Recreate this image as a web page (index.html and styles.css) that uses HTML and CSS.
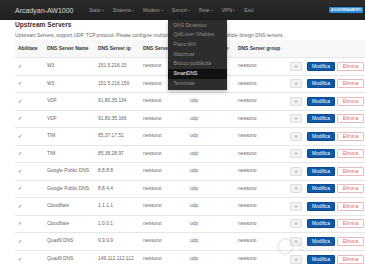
FILE: index.html
```html
<!DOCTYPE html>
<html lang="it">
<head>
  <meta charset="UTF-8" />
  <meta name="viewport" content="width=device-width, initial-scale=1.0"/>
  <title>Arcadyan-AW1000 - SmartDNS</title>
  <link rel="stylesheet" href="styles.css">
</head>
<body>

  <!-- barra di navigazione -->
  <header class="navbar">
    <a class="brand" href="#">Arcadyan-AW1000</a>
    <ul class="nav">
      <li><a href="#">Stato <span class="caret"></span></a></li>
      <li><a href="#">Sistema <span class="caret"></span></a></li>
      <li><a href="#">Modem <span class="caret"></span></a></li>
      <li class="open">
        <a href="#">Servizi <span class="caret"></span></a>
        <ul class="dropdown">
          <li><a href="#">DNS Dinamico</a></li>
          <li><a href="#">QoS over Nftables</a></li>
          <li><a href="#">Piano Wifi</a></li>
          <li><a href="#">Watchcat</a></li>
          <li><a href="#">Blocco pubblicità</a></li>
          <li class="active"><a href="#">SmartDNS</a></li>
          <li><a href="#">Terminale</a></li>
        </ul>
      </li>
      <li><a href="#">Rete <span class="caret"></span></a></li>
      <li><a href="#">VPN <span class="caret"></span></a></li>
      <li><a href="#">Esci</a></li>
    </ul>
    <span class="badge">AGGIORNAMENTI</span>
  </header>

  <main class="content">
    <h2>Upstream Servers</h2>
    <p class="desc">Upstream Servers, support UDP, TCP protocol. Please configure multiple DNS servers, including multiple foreign DNS servers.</p>

    <table class="servers">
      <colgroup>
        <col class="c-enable"><col class="c-name"><col class="c-ip"><col class="c-port"><col class="c-type"><col class="c-group"><col class="c-actions">
      </colgroup>
      <thead>
        <tr>
          <th>Abilitare</th>
          <th>DNS Server Name</th>
          <th>DNS Server ip</th>
          <th>DNS Server port</th>
          <th>DNS Server type</th>
          <th>DNS Server group</th>
          <th></th>
        </tr>
      </thead>
      <tbody id="rows"></tbody>
    </table>
  </main>

  <!-- filigrana -->
  <div class="watermark"><span class="wm-logo"></span>Subito</div>

  <script>
    const servers = [
      ["W3", "151.5.216.15"],
      ["W3", "151.5.216.150"],
      ["VDF", "91.80.35.134"],
      ["VDF", "91.80.35.166"],
      ["TIM", "85.37.17.51"],
      ["TIM", "85.38.28.97"],
      ["Google Public DNS", "8.8.8.8"],
      ["Google Public DNS", "8.8.4.4"],
      ["Cloudflare", "1.1.1.1"],
      ["Cloudflare", "1.0.0.1"],
      ["Quad9 DNS", "9.9.9.9"],
      ["Quad9 DNS", "149.112.112.112"]
    ];

    const tbody = document.getElementById("rows");
    servers.forEach(function(s) {
      const tr = document.createElement("tr");
      tr.innerHTML =
        '<td><span class="check">✓</span></td>' +
        '<td>' + s[0] + '</td>' +
        '<td>' + s[1] + '</td>' +
        '<td>nessuno</td>' +
        '<td>udp</td>' +
        '<td>nessuno</td>' +
        '<td><div class="actions"><button class="btn btn-drag">≡</button>' +
        '<button class="btn btn-edit">Modifica</button>' +
        '<button class="btn btn-remove">Elimina</button></div></td>';
      tbody.appendChild(tr);
    });
  </script>

</body>
</html>
```

FILE: styles.css
```css
body {
  margin: 0;
  font-family: 'Liberation Sans', Arial, sans-serif;
  background: #fff;
  color: #555;
  overflow: hidden;
}

/* barra di navigazione */
.navbar {
  height: 20px;
  display: flex;
  align-items: center;
  padding-left: 15px;
  background: linear-gradient(to bottom, #2c2c2c, #1f1f1f);
  position: relative;
  z-index: 10;
}

.brand {
  color: #ddd;
  text-decoration: none;
  font-size: 7px;
}

.nav {
  list-style: none;
  margin: 0 0 0 11px;
  padding: 0;
  display: flex;
  height: 100%;
}

.nav > li {
  position: relative;
  display: flex;
  align-items: center;
}

.nav > li > a {
  color: #9d9d9d;
  text-decoration: none;
  font-size: 5px;
  padding: 0 4.4px;
  white-space: nowrap;
}

.caret {
  display: inline-block;
  width: 0;
  height: 0;
  vertical-align: middle;
  border-top: 1.5px solid #9d9d9d;
  border-left: 1.5px solid transparent;
  border-right: 1.5px solid transparent;
}

.dropdown {
  position: absolute;
  top: 100%;
  left: 1px;
  width: 59px;
  margin: 0;
  padding: 0.5px 0 2px;
  list-style: none;
  background: #2d2d2d;
  box-shadow: 0 2px 4px rgba(0,0,0,0.25);
}

.dropdown li a {
  display: block;
  height: 9.7px;
  line-height: 9.7px;
  padding-left: 5px;
  font-size: 5px;
  color: #8f8f8f;
  text-decoration: none;
  white-space: nowrap;
}

.dropdown li.active a {
  background: #111;
  color: #fff;
}

.badge {
  margin-left: auto;
  margin-right: 2px;
  background: #2a8ad6;
  color: #fff;
  font-size: 3.4px;
  font-weight: bold;
  padding: 1px 1.8px;
  border-radius: 1px;
  letter-spacing: 0.1px;
}

/* contenuto */
.content {
  padding: 0 15px;
}

h2 {
  margin: 1px 0 0;
  font-size: 6.6px;
  line-height: 8px;
  color: #333;
}

.desc {
  margin: 2.5px 0 0;
  font-size: 4.8px;
  line-height: 7px;
  color: #666;
  white-space: nowrap;
}

.servers {
  table-layout: fixed;
  width: 357px;
  border-collapse: collapse;
  margin-top: 1.5px;
  font-size: 4.9px;
}

.c-enable { width: 29px; }
.c-name { width: 51px; }
.c-ip { width: 45px; }
.c-port { width: 47px; }
.c-type { width: 48px; }
.c-group { width: 52px; }

.servers tr {
  height: 17.5px;
}

.servers th,
.servers td {
  box-sizing: border-box;
  height: 17.5px;
  padding: 0 3px;
  text-align: left;
  white-space: nowrap;
  overflow: hidden;
  line-height: 6px;
}

.servers th {
  color: #333;
  font-weight: bold;
  background: #f7f7f7;
}

.servers td {
  border-top: 1px solid #e6e6e6;
  color: #666;
}

.check {
  font-family: 'DejaVu Sans', sans-serif;
  font-size: 5px;
  color: #555;
}

.actions {
  display: flex;
  align-items: center;
}

.btn {
  box-sizing: border-box;
  height: 9px;
  padding: 0;
  font-family: inherit;
  font-size: 4.8px;
  border-radius: 1px;
  border: 0.6px solid;
}

.btn-drag {
  width: 12px;
  background: #f3f3f3;
  border-color: #ddd;
  color: #999;
  font-family: 'DejaVu Sans', sans-serif;
}

.btn-edit {
  width: 28px;
  margin-left: 5px;
  background: #1059a8;
  border-color: #0b4a8e;
  color: #fff;
}

.btn-remove {
  width: 27px;
  margin-left: 2px;
  background: #fff;
  border-color: #eab9b9;
  color: #dd6b6b;
}

/* filigrana */
.watermark {
  position: absolute;
  left: 277px;
  top: 238px;
  display: flex;
  align-items: center;
  gap: 3px;
  font-size: 12px;
  font-weight: bold;
  color: rgba(160,160,160,0.18);
  pointer-events: none;
}

.wm-logo {
  width: 13px;
  height: 13px;
  border-radius: 50%;
  border: 2px solid rgba(160,160,160,0.18);
}
```
